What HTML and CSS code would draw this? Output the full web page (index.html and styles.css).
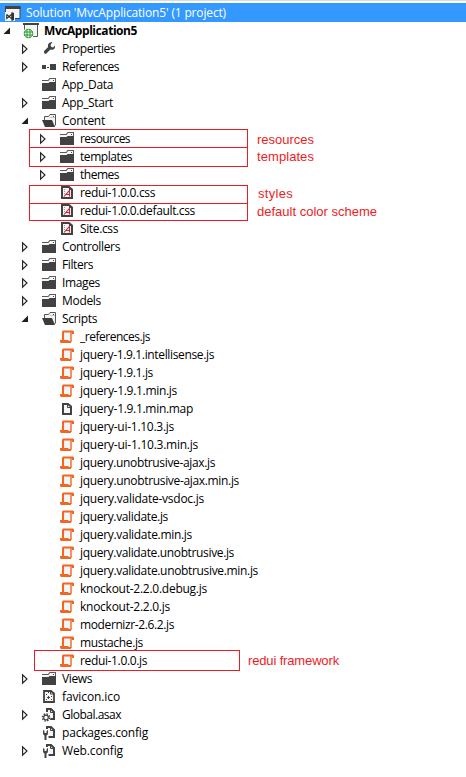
FILE: index.html
```html
<!DOCTYPE html>
<html lang="en">
<head>
<meta charset="utf-8">
<title>Solution Explorer</title>
<link rel="stylesheet" href="styles.css">
</head>
<body>
<svg class="defs" aria-hidden="true">
  <symbol id="closed" viewBox="0 0 10 18"><path d="M2.600 4.800V13.200L7 9Z" fill="#fff" stroke="#222" stroke-width="1.150"/></symbol>
  <symbol id="open" viewBox="0 0 10 18"><path d="M8 5.500V12H1.500Z" fill="#1e1e1e"/></symbol>
  <symbol id="folder" viewBox="0 0 16 16"><path d="M1 3H7L8.500 1H15V6H1Z" fill="#5a5a5a"/><path d="M1 4H7.500L9 2H14V5H8.500L7.500 6H1Z" fill="#f6f6f6"/><path d="M12 3h1v1h-1z" fill="#424242"/><path d="M1 6H8L9 5H15V14H1Z" fill="#424242"/></symbol>
  <symbol id="folder-open" viewBox="0 0 16 16"><path d="M3.500 7V3.500H7.500L9 1.500H14.500V12L13 13.500" fill="#f3f3f3" stroke="#555"/><path d="M8 5H14V4H9Z" fill="#ccc"/><path d="M12 3h1v1h-1z" fill="#424242"/><path d="M1 7H11L14 14H4Z" fill="#3c3c3c"/></symbol>
  <symbol id="js" viewBox="0 0 16 16"><path d="M5 3H12V12H5Z" fill="#f4f4f4"/><path d="M3 2.500L4 1.500H14L15 2.500V5H13V3.500H5V11H9L10 12H12V14H2L1 13V11H3Z" fill="#f26522"/><path d="M12 3V13" stroke="#f26522" stroke-width="1.400"/></symbol>
  <symbol id="doc" viewBox="0 0 16 16"><path d="M4 3H9L12 5.500V13H4Z" fill="#f5f5f5" stroke="#424242" stroke-width="2"/><path d="M8.500 2V6.500H13" fill="none" stroke="#424242"/></symbol>
  <symbol id="css" viewBox="0 0 16 16"><path d="M3 2H10L13 4.500V13H3Z" fill="#f5f5f5" stroke="#424242" stroke-width="2"/><path d="M10 2V5H13Z" fill="#424242"/><path d="M5 11.500L10.500 5.500V11.500M6.500 9.500H10.500" fill="none" stroke="#c4273b" stroke-width="1.100"/><path d="M5 4h1v1H5zM5 6h1v1H5zM5 8h1v1H5z" fill="#999"/></symbol>
  <symbol id="ico" viewBox="0 0 16 16"><path d="M3 2H10L13 4.500V13H3Z" fill="#f5f5f5" stroke="#424242" stroke-width="1.800"/><path d="M9.500 2V5H13" fill="none" stroke="#424242"/><path d="M5 5h1v1H5zM5 10h1v1H5zM10 10h1v1h-1zM7 3h1v1H7zM10 7h1v1h-1zM7 7h1v1h1v1H8v1H7V9H6V8h1z" fill="#424242"/></symbol>
  <symbol id="gear" viewBox="0 0 16 16"><path d="M6 5V2H10L13 5V12H9" fill="#f5f5f5" stroke="#424242" stroke-width="2"/><path d="M9.500 2V5.500H13" fill="none" stroke="#424242"/><circle cx="5" cy="10.500" r="4.600" fill="#fff"/><circle cx="5" cy="10.500" r="3.500" fill="none" stroke="#424242" stroke-width="1.600" stroke-dasharray="1.500 1.249"/><circle cx="5" cy="10.500" r="2.300" fill="#fff" stroke="#424242" stroke-width="1.200"/></symbol>
  <symbol id="config" viewBox="0 0 16 16"><path d="M6 4V2H10L13 5V12H7" fill="#f5f5f5" stroke="#424242" stroke-width="2"/><path d="M9.500 2V5.500H13" fill="none" stroke="#424242"/><path d="M1 4H7.500V15H3V9H1Z" fill="#fff"/><path d="M2 5V8Q2 10 3.500 10.500V15H5.500V10.500Q7 10 7 8V5L5.500 6V8H3.500V6Z" fill="#424242"/></symbol>
  <symbol id="wrench" viewBox="0 0 16 16"><path d="M9 6.500L4.500 11" stroke="#424242" stroke-width="3.200" stroke-linecap="round"/><path d="M11.500 1Q8 .7 7 3.500Q6.500 6 8 7.500Q10 9.500 12.500 8.500Q14.500 7.500 14 4.500L12 6.500L10 6L9.500 4Z" fill="#424242"/></symbol>
  <symbol id="refs" viewBox="0 0 16 16"><path d="M1 6h4v4H1zM6 8h2v1H6zM9 5h6v6H9z" fill="#424242"/></symbol>
  <symbol id="project" viewBox="0 0 16 18"><path d="M1.500 1V14.500H14.500V1" fill="#f4f4f4" stroke="#555"/><path d="M0 1H16V3H0Z" fill="#424242"/><circle cx="5.500" cy="11.500" r="5.500" fill="#fff"/><circle cx="5.500" cy="11.500" r="4.300" fill="#eaf6ea" stroke="#2f962f"/><path d="M1 10H10M1 13H10M4 7.500V15.500M7 7.500V15.500" fill="none" stroke="#2f962f"/></symbol>
  <symbol id="solution" viewBox="0 0 16 16"><path d="M.5 1.500H15V13.500H.5Z" fill="#f4f4f4" stroke="#424242"/><path d="M0 1H15.500V4H0Z" fill="#424242"/><path d="M0 7H10V16H0Z" fill="#f4f4f4"/><path d="M1.700 9.500V13.500L7 9V14L1.700 9.500" fill="none" stroke="#333" stroke-width="1.100"/><path d="M6.500 7L9 8V15L6.500 16Z" fill="#333"/></symbol>
</svg>
<div class="explorer">
  <header class="solution"><svg class="icon"><use href="#solution"/></svg><span class="label" data-width="200">Solution 'MvcApplication5' (1 project)</span></header>
  <main class="tree" id="tree"></main>
  <div class="mark resources"></div>
  <div class="mark styles"></div>
  <div class="mark framework"></div>
  <span class="note note-resources" data-width="57">resources</span>
  <span class="note note-templates" data-width="57">templates</span>
  <span class="note note-styles" data-width="35">styles</span>
  <span class="note note-scheme" data-width="120">default color scheme</span>
  <span class="note note-framework" data-width="91">redui framework</span>
</div>
<script src="tree.js"></script>
</body>
</html>
```
FILE: styles.css
```css
body {
  margin: 0;
  background: #fff;
  color: #000;
  font: 12px/18px "Open Sans", "Noto Sans", sans-serif;
}
.defs { position: absolute; width: 0; height: 0; }
.explorer {
  position: relative;
  width: 466px;
  height: 777px;
  overflow: hidden;
  box-sizing: border-box;
  border-top: 1px solid #d6dbe9;
  padding-top: 2px;
}
.solution {
  display: flex;
  align-items: center;
  height: 19px;
  padding-left: 5px;
  gap: 5px;
  background: #3399ff;
  color: #fff;
}
.icon { flex: none; width: 16px; height: 16px; }
.label { white-space: nowrap; }
.row { display: flex; align-items: center; height: 18px; }
.level-0 { padding-left: 2px; font-weight: 700; }
.level-1 { padding-left: 20px; }
.level-2 { padding-left: 38px; }
.arrow { flex: none; width: 10px; height: 18px; margin-right: 11px; }
.row .icon { margin-right: 5px; }
.level-0 .icon { height: 18px; }
.mark { position: absolute; box-sizing: border-box; border: 1px solid #ed1c24; }
.resources { left: 29px; top: 128px; width: 219px; height: 38px; }
.styles { left: 29px; top: 184px; width: 219px; height: 36px; }
.resources::after, .styles::after {
  content: "";
  display: block;
  height: 17px;
  border-bottom: 1px solid #ed1c24;
}
.framework { left: 34px; top: 649px; width: 206px; height: 21px; }
.note {
  position: absolute;
  white-space: nowrap;
  color: #ed1c24;
  font: 13px/16px "Liberation Sans", Arial, sans-serif;
}
.note-resources { left: 257px; top: 131px; }
.note-templates { left: 257px; top: 148px; }
.note-styles { left: 258px; top: 185px; }
.note-scheme { left: 257px; top: 203px; }
.note-framework { left: 248px; top: 652px; }
```
FILE: tree.js
```js
// level, arrow, icon, name, label width
const rows = [
  [0, "open", "project", "MvcApplication5", 93],
  [1, "closed", "wrench", "Properties", 53],
  [1, "closed", "refs", "References", 57],
  [1, "", "folder", "App_Data", 51],
  [1, "closed", "folder", "App_Start", 51],
  [1, "open", "folder-open", "Content", 43],
  [2, "closed", "folder", "resources", 50],
  [2, "closed", "folder", "templates", 52],
  [2, "closed", "folder", "themes", 39],
  [2, "", "css", "redui-1.0.0.css", 75],
  [2, "", "css", "redui-1.0.0.default.css", 115],
  [2, "", "css", "Site.css", 38],
  [1, "closed", "folder", "Controllers", 58],
  [1, "closed", "folder", "Filters", 31],
  [1, "closed", "folder", "Images", 38],
  [1, "closed", "folder", "Models", 39],
  [1, "open", "folder-open", "Scripts", 35],
  [2, "", "js", "_references.js", 70],
  [2, "", "js", "jquery-1.9.1.intellisense.js", 134],
  [2, "", "js", "jquery-1.9.1.js", 73],
  [2, "", "js", "jquery-1.9.1.min.js", 97],
  [2, "", "doc", "jquery-1.9.1.min.map", 113],
  [2, "", "js", "jquery-ui-1.10.3.js", 94],
  [2, "", "js", "jquery-ui-1.10.3.min.js", 118],
  [2, "", "js", "jquery.unobtrusive-ajax.js", 135],
  [2, "", "js", "jquery.unobtrusive-ajax.min.js", 159],
  [2, "", "js", "jquery.validate-vsdoc.js", 124],
  [2, "", "js", "jquery.validate.js", 88],
  [2, "", "js", "jquery.validate.min.js", 112],
  [2, "", "js", "jquery.validate.unobtrusive.js", 154],
  [2, "", "js", "jquery.validate.unobtrusive.min.js", 178],
  [2, "", "js", "knockout-2.2.0.debug.js", 127],
  [2, "", "js", "knockout-2.2.0.js", 90],
  [2, "", "js", "modernizr-2.6.2.js", 94],
  [2, "", "js", "mustache.js", 63],
  [2, "", "js", "redui-1.0.0.js", 67],
  [1, "closed", "folder", "Views", 30],
  [1, "", "ico", "favicon.ico", 58],
  [1, "closed", "gear", "Global.asax", 59],
  [1, "", "config", "packages.config", 86],
  [1, "closed", "config", "Web.config", 61]
];

document.getElementById("tree").innerHTML = rows.map(([level, arrow, icon, name, width]) => `
  <div class="row level-${level}">
    <svg class="arrow">${arrow ? `<use href="#${arrow}"/>` : ""}</svg>
    <svg class="icon"><use href="#${icon}"/></svg>
    <span class="label" data-width="${width}">${name}</span>
  </div>`).join("");

document.querySelectorAll("[data-width]").forEach(label => {
  const natural = label.getBoundingClientRect().width;
  const spacing = (Number(label.dataset.width) - natural) / label.textContent.length;
  label.style.letterSpacing = spacing.toFixed(3) + "px";
});
```
